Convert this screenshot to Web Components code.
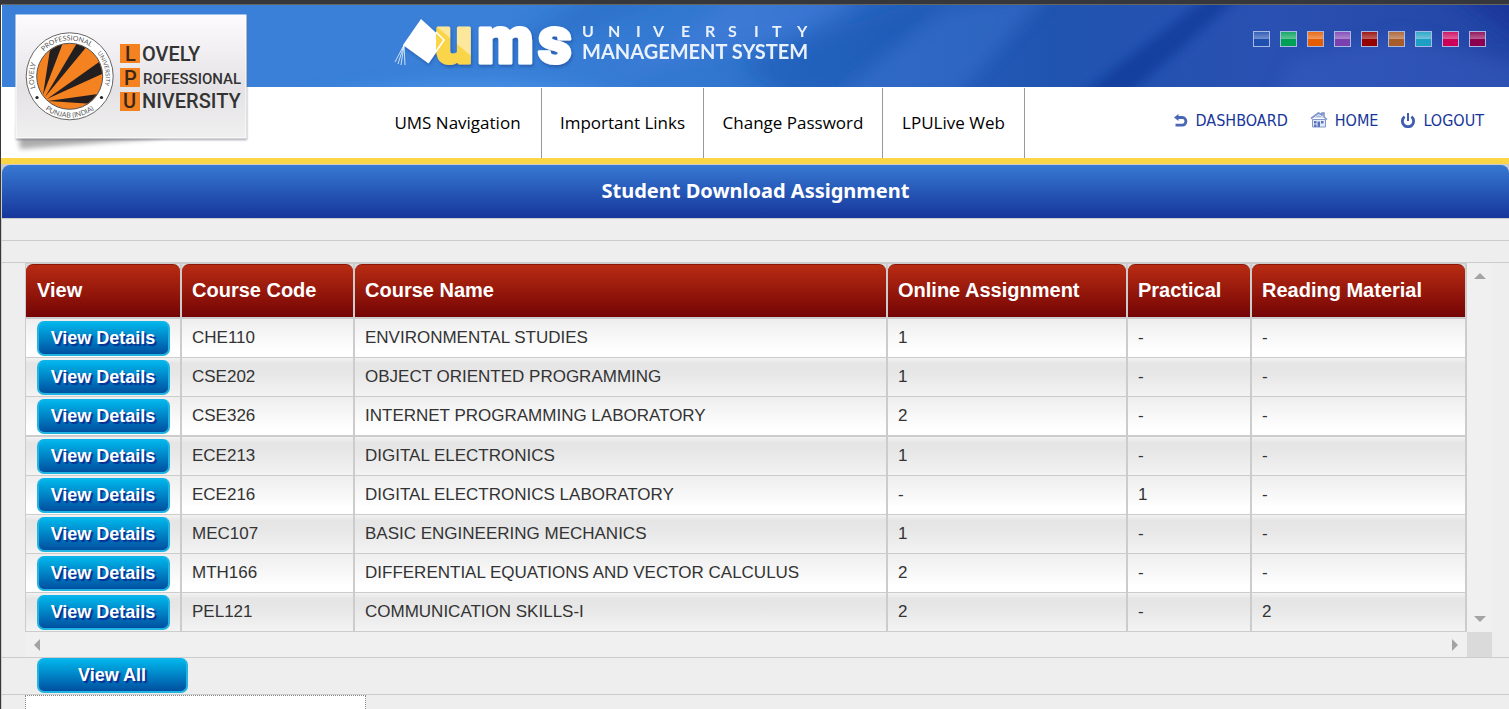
<!DOCTYPE html>
<html lang="en">
<head>
<meta charset="utf-8">
<title>Student Download Assignment</title>
<style>
  html, body { margin: 0; }
  body { background: #eee; font-family: "Liberation Sans", Arial, sans-serif; color: #333; }
</style>
</head>
<body>
<ums-page>
  <ums-header slot="header"></ums-header>
  <title-band>Student Download Assignment</title-band>
  <line-row></line-row>
  <line-row></line-row>
  <scroll-frame><course-table></course-table></scroll-frame>
  <action-row><ums-button wide>View All</ums-button></action-row>
  <detail-panel></detail-panel>
</ums-page>

<script>
const define = (name, html, setup) => {
  const tpl = document.createElement('template');
  tpl.innerHTML = html;
  customElements.define(name, class extends HTMLElement {
    constructor() {
      super();
      this.attachShadow({ mode: 'open' }).append(tpl.content.cloneNode(true));
      if (setup) setup(this.shadowRoot, this);
    }
  });
};

define('ums-page', `
<style>
  :host { display: flex; flex-direction: column; box-sizing: border-box; min-height: 100vh;
    border-top: 4px solid #36373b; border-left: 1px solid #36373b; }
  main { flex: 1; display: flex; flex-direction: column; border-left: 1px solid #ccc; }
</style>
<slot name="header"></slot>
<main><slot></slot></main>`);

define('ums-header', `
<style>
  :host { display: block; position: relative; flex: none; background: #fff;
    border-top: 1px solid #666; border-bottom: 6px solid #fad548; }
  lpu-logo { position: absolute; left: 10px; top: 5px; }
</style>
<ums-banner></ums-banner>
<ums-nav></ums-nav>
<lpu-logo></lpu-logo>`);

define('ums-banner', `
<style>
  :host { position: relative; display: flex; align-items: flex-start; justify-content: space-between;
    height: 82px; margin-left: 1px;
    background: linear-gradient(90deg, #3a80d8 0%, #3a80d8 33%, #3277cf 47%, #2763c0 58%, #2054b0 70%, #2a50b2 85%, #2245a5 100%); }
  .streaks { position: absolute; inset: 0; width: 100%; height: 100%; }
  ums-wordmark { position: relative; margin-left: 388px; }
  theme-swatches { position: relative; margin: 26px 23px 0 0; }
</style>
<svg class="streaks" viewBox="0 0 1507 82" preserveAspectRatio="none" aria-hidden="true">
  <defs>
    <filter id="soft" x="-20%" y="-50%" width="140%" height="200%"><feGaussianBlur stdDeviation="8"/></filter>
    <filter id="edge" x="-20%" y="-50%" width="140%" height="200%"><feGaussianBlur stdDeviation="5"/></filter>
  </defs>
  <g filter="url(#soft)">
    <path d="M300 95 Q480 60 640 95Z" fill="#4d95ea" opacity=".8"/>
    <path d="M590 -15 L690 -15 Q570 40 450 60 Q520 40 590 -15Z" fill="#2468bf" opacity=".45"/>
    <path d="M735 -18 L870 -18 Q820 25 740 42 Q660 60 590 70 Q690 40 735 -18Z" fill="#477fdd" opacity=".5"/>
    <path d="M820 30 L950 -15 L860 80 L790 95 L740 60Z" fill="#1a58b2" opacity=".45"/>
    <path d="M945 5 L1050 -15 L950 95 L830 95 L870 60Z" fill="#376fcb" opacity=".5"/>
    <path d="M1290 55 L1400 30 L1520 60 L1520 100 L1270 100Z" fill="#355cc2" opacity=".5"/>
    <path d="M1440 -20 L1530 -20 L1530 45Z" fill="#1a3699" opacity=".8"/>
  </g>
  <path filter="url(#edge)" d="M1215 -15 L1245 -15 L1115 100 L1065 100Z" fill="#0c3796" opacity=".65"/>
</svg>
<ums-wordmark></ums-wordmark>
<theme-swatches></theme-swatches>`);

define('ums-wordmark', `
<style>
  :host { display: block; }
  svg { display: block; overflow: visible; }
  .big { font: 900 66px Roboto, sans-serif; fill: #fff; stroke: #fff; stroke-width: 3px; stroke-linejoin: round; }
  .big .gold { fill: url(#arm); stroke: url(#arm); }
  .uni { font: 700 16px Lato, sans-serif; }
  .man { font: 700 20px Lato, sans-serif; }
</style>
<svg width="430" height="72" viewBox="0 0 430 72" role="img" aria-label="UMS University Management System">
  <defs>
    <filter id="drop" x="-10%" y="-20%" width="120%" height="150%"><feDropShadow dx="1" dy="2" stdDeviation="1.5" flood-color="#143c86" flood-opacity=".5"/></filter>
    <linearGradient id="arm" gradientUnits="userSpaceOnUse" x1="67" y1="45" x2="73" y2="38"><stop offset=".45" stop-color="#fad548"/><stop offset=".55" stop-color="#fde79a"/></linearGradient>
  </defs>
  <g filter="url(#drop)">
    <text class="big" x="45 87 148" y="58"><tspan class="gold">u</tspan>ms</text>
    <path d="M31 14 L54 35 L38 58 L13 40Z" fill="#fff"/>
  </g>
  <path d="M46 27 L54 35 L46 47Z" fill="#fad548"/>
  <path d="M46 27 L54 35 L38 58" fill="none" stroke="#fff" stroke-width="1.5"/>
  <path d="M14 40 L8 59 M14 40 L11 60 M14 40 L15 60 M14 40 L5 57" stroke="#fff" stroke-width="1" fill="none" opacity=".75"/>
  <text class="uni" y="32" x="192 218 246 263 291 315 338 364 382 407" fill="#e9f1fc">UNIVERSITY</text>
  <text class="man" x="192" y="54" fill="#e9f1fc">MANAGEMENT SYSTEM</text>
</svg>`);

define('theme-swatches', `
<style>
  :host { display: flex; gap: 10px; }
  button { width: 17px; height: 16px; padding: 0; border: 1px solid #a9b9e2; border-radius: 0;
    background: linear-gradient(rgba(255,255,255,.1), rgba(255,255,255,.38) 50%, transparent 50%) var(--c); }
</style>`, root => {
  const colours = { Blue: '#1f4fb0', Green: '#00a056', Orange: '#e65c00', Purple: '#7b40b0', Red: '#950000',
    Brown: '#a75c2a', Teal: '#1c9fc4', Pink: '#cc0058', Plum: '#8b004f' };
  for (const [name, c] of Object.entries(colours)) {
    const b = document.createElement('button');
    b.type = 'button';
    b.setAttribute('aria-label', name + ' theme');
    b.style.setProperty('--c', c);
    root.append(b);
  }
});

define('lpu-logo', `
<style>
  :host { display: block; }
  svg { display: block; }
  .ring { font: 7px Lato, sans-serif; fill: #555; }
  .ring.small { font-size: 6px; }
  .box { font: 500 20px Roboto, sans-serif; fill: #3b2618; }
  .w { font: 500 20px Roboto, sans-serif; fill: #333; }
  .s { font: 500 15px Roboto, sans-serif; fill: #333; }
</style>
<svg width="240" height="148" viewBox="11 10 240 148" role="img" aria-label="Lovely Professional University">
  <defs>
    <linearGradient id="card" x1="0" y1="0" x2="0" y2="1"><stop offset="0" stop-color="#fdfbfd"/><stop offset=".6" stop-color="#e4e2e4"/><stop offset="1" stop-color="#f1f0f1"/></linearGradient>
    <filter id="b1" x="-20%" y="-50%" width="140%" height="200%"><feGaussianBlur stdDeviation="2.5"/></filter>
    <filter id="b2"><feGaussianBlur stdDeviation="1"/></filter>
    <clipPath id="disc"><circle cx="69.7" cy="76.3" r="32.5"/></clipPath>
    <path id="arcTop" d="M37 91.5 A36 36 0 1 1 102.4 91.5" fill="none"/>
    <path id="arcBot" d="M36 100 A41.2 41.2 0 0 0 103.4 100" fill="none"/>
  </defs>
  <path d="M18 128 L200 130 L150 139 L20 149Z" fill="#777" opacity=".6" filter="url(#b1)"/>
  <rect x="16" y="16" width="231" height="124" fill="#667" opacity=".6" filter="url(#b2)"/>
  <rect x="16" y="15" width="230" height="123" fill="url(#card)" stroke="#fff"/>
  <circle cx="69.7" cy="76.3" r="43.5" fill="#fff" stroke="#666"/>
  <circle cx="69.7" cy="76.3" r="33" fill="#f58220" stroke="#555"/>
  <g clip-path="url(#disc)" fill="#231f20">
    <path d="M43 95 L51 43 L64 40Z"/>
    <path d="M45 97 L77 43 L88 45Z"/>
    <path d="M47 99 L99 62 L104 73Z"/>
    <path d="M48 101 L98 94 L94 104Z"/>
  </g>
  <text class="ring"><textPath href="#arcTop" startOffset="4">LOVELY</textPath></text>
  <text class="ring"><textPath href="#arcTop" startOffset="43">PROFESSIONAL</textPath></text>
  <text class="ring small"><textPath href="#arcTop" startOffset="103">UNIVERSITY</textPath></text>
  <text class="ring" text-anchor="middle"><textPath href="#arcBot" startOffset="50%">PUNJAB (INDIA)</textPath></text>
  <circle cx="37" cy="97.5" r="1.6" fill="#222"/><circle cx="101.5" cy="97.5" r="1.6" fill="#222"/>
  <path d="M120 44h20v19h-20z M120 68h20v19h-20z M120 92h20v19h-20z" fill="#f58220"/>
  <text class="box" x="125" y="61">L</text><text class="w" x="142" y="61">OVELY</text>
  <text class="box" x="124" y="85">P</text><text class="s" x="143" y="84">ROFESSIONAL</text>
  <text class="box" x="123" y="108">U</text><text class="w" x="142" y="108">NIVERSITY</text>
</svg>`);

define('ums-nav', `
<style>
  :host { display: flex; justify-content: space-between; height: 71px; margin-left: 1px; }
  nav { display: grid; grid-template-columns: 168px 162px 179px 142px; margin-left: 372px; }
  nav a { display: flex; align-items: center; justify-content: center; border-right: 1px solid #999; padding-bottom: 2px;
    font: 17px "Open Sans", sans-serif; color: #000; text-decoration: none; white-space: nowrap; margin-top: 1px; }
  .user { display: flex; gap: 22px; margin: 23px 25px 0 0; }
  .user a { display: flex; align-items: center; gap: 7px; height: 20px; color: #17369a;
    font: 16px "DejaVu Sans Condensed", "Noto Sans", sans-serif; text-decoration: none; }
</style>
<nav>
  <a href="#nav">UMS Navigation</a><a href="#links">Important Links</a><a href="#password">Change Password</a><a href="#live">LPULive Web</a>
</nav>
<div class="user">
  <a href="#dashboard"><svg width="16" height="16" viewBox="0 0 16 16" aria-hidden="true"><path d="M4 5.500h5.500a3.400 3.800 0 0 1 0 7.600H2.500" fill="none" stroke="#4a66b5" stroke-width="2.800"/><path d="M1 5.500 5.500 2v7z" fill="#4a66b5"/></svg>DASHBOARD</a>
  <a href="#home"><svg width="18" height="16" viewBox="0 0 18 16" aria-hidden="true"><path d="M1 6.500 8.500 1 12 3V1h2v4l3 2.500" fill="none" stroke="#7b91cc" stroke-width="1.600"/><path d="M4.500 5.500 8.500 3 13.500 5.500z" fill="#aab8e0"/><path d="M2.500 7.500h13v7.500h-13z" fill="#e4e9f6" stroke="#8496cc"/><path d="M4 9h2.500v2.500H4z M11 9h2.500v2.500H11z M7.500 9.500h2.500V15H7.500z M4 12.500h2.500V15H4z" fill="#5b74bd"/></svg>HOME</a>
  <a href="#logout"><svg width="16" height="16" viewBox="0 0 16 16" aria-hidden="true"><path d="M4.600 4.700A5.600 5.600 0 1 0 11.400 4.700" fill="none" stroke="#405db0" stroke-width="2.800"/><path d="M8 1v8" stroke="#405db0" stroke-width="2"/></svg>LOGOUT</a>
</div>`);

define('title-band', `
<style>
  :host { display: block; flex: none; background: #ccc; padding-top: 1px; border-bottom: 1px solid #ccc; }
  h1 { margin: 0; padding-bottom: 2px; border-radius: 8px 8px 0 0; background: linear-gradient(#3779d3, #16369a); color: #fff;
    font: bold 20px/51px "Noto Sans", sans-serif; text-align: center; }
</style>
<h1><slot></slot></h1>`);

define('line-row', `<style>:host { display: block; flex: none; height: 21px; border-bottom: 1px solid #ccc; }</style>`);

define('scroll-frame', `
<style>
  :host { display: grid; flex: none; grid-template: auto 25px / 1fr 25px; padding: 0 17px 0 23px; border-bottom: 1px solid #ccc; }
  .bar { display: flex; justify-content: space-between; align-items: center; background: #f0f0f0; }
  .v { flex-direction: column; padding: 10px 0; }
  .h { padding: 0 9px; }
  .corner { background: #dadada; }
  path { fill: #a3a3a3; }
  svg { display: block; }
</style>
<slot></slot>
<div class="bar v">
  <svg width="12" height="6" viewBox="0 0 12 6"><path d="M0 6 6 0l6 6z"/></svg>
  <svg width="12" height="6" viewBox="0 0 12 6"><path d="M0 0 6 6l6-6z"/></svg>
</div>
<div class="bar h">
  <svg width="6" height="12" viewBox="0 0 6 12"><path d="M6 0 0 6l6 6z"/></svg>
  <svg width="6" height="12" viewBox="0 0 6 12"><path d="M0 0 6 6 0 12z"/></svg>
</div>
<div class="corner"></div>`);

define('ums-button', `
<style>
  :host { display: block; }
  button { display: block; width: 133px; height: 35px; padding: 0 1px 0 0; border: 2px solid #22b4e0; border-top-color: #0cb4ea; border-radius: 7px;
    background: linear-gradient(#00b4ea, #0050a0); color: #fff; font: bold 18px/29px "Liberation Sans", Arial, sans-serif;
    text-shadow: 2px 2px 1px #0a2f93; text-align: center; }
  :host([wide]) button { width: 151px; }
</style>
<button type="button"><slot></slot></button>`);

define('course-table', `
<style>
  :host { display: block; }
  table { width: 100%; table-layout: fixed; border-collapse: separate; border-spacing: 0; border-top: 1px solid #ccc; border-left: 1px solid #ccc; }
  th, td { box-sizing: border-box; padding: 0 0 0 10px; text-align: left; border-right: 2px solid #ccc; white-space: nowrap; }
  th { height: 55px; font-size: 20px; color: #fff; border-bottom: 2px solid #ccc; padding-left: 0; background: #ddd; }
  th span { display: block; padding: 0 0 2px 10px; line-height: 50px; border-top: 1px solid #8a1708; border-radius: 7px 7px 0 0; background: linear-gradient(#b82b12, #740505); }
  td { height: 39px; font-size: 17px; border-bottom: 1px solid #ccc; background: linear-gradient(#eee, #fff 85%); }
  tr:nth-child(even) td { background: linear-gradient(#f2f2f2, #e5e5e5 15%, #e7e7e7 40%, #f3f3f3); }
  tr:nth-child(3) td { height: 40px; border-bottom-width: 2px; }
  th:first-child span, td:first-child { padding-left: 11px; }
</style>
<table>
  <colgroup><col style="width:156px"><col style="width:173px"><col><col style="width:240px"><col style="width:124px"><col style="width:215px"></colgroup>
  <thead><tr><th><span>View</span></th><th><span>Course Code</span></th><th><span>Course Name</span></th><th><span>Online Assignment</span></th><th><span>Practical</span></th><th><span>Reading Material</span></th></tr></thead>
  <tbody></tbody>
</table>`, root => {
  const rows = [
    ['CHE110', 'ENVIRONMENTAL STUDIES', '1', '-', '-'],
    ['CSE202', 'OBJECT ORIENTED PROGRAMMING', '1', '-', '-'],
    ['CSE326', 'INTERNET PROGRAMMING LABORATORY', '2', '-', '-'],
    ['ECE213', 'DIGITAL ELECTRONICS', '1', '-', '-'],
    ['ECE216', 'DIGITAL ELECTRONICS LABORATORY', '-', '1', '-'],
    ['MEC107', 'BASIC ENGINEERING MECHANICS', '1', '-', '-'],
    ['MTH166', 'DIFFERENTIAL EQUATIONS AND VECTOR CALCULUS', '2', '-', '-'],
    ['PEL121', 'COMMUNICATION SKILLS-I', '2', '-', '2'],
  ];
  root.querySelector('tbody').innerHTML = rows.map(r =>
    '<tr><td><ums-button>View Details</ums-button></td>' + r.map(c => `<td>${c}</td>`).join('') + '</tr>').join('');
});

define('action-row', `<style>:host { display: block; flex: none; padding: 0 35px 1px; border-bottom: 1px solid #ccc; }</style><slot></slot>`);

define('detail-panel', `
<style>
  :host { display: flex; flex: 1; padding-left: 23px; }
  div { width: 339px; background: #fff; border: 1px dotted #888; border-bottom: 0; }
</style>
<div></div>`);
</script>
</body>
</html>
